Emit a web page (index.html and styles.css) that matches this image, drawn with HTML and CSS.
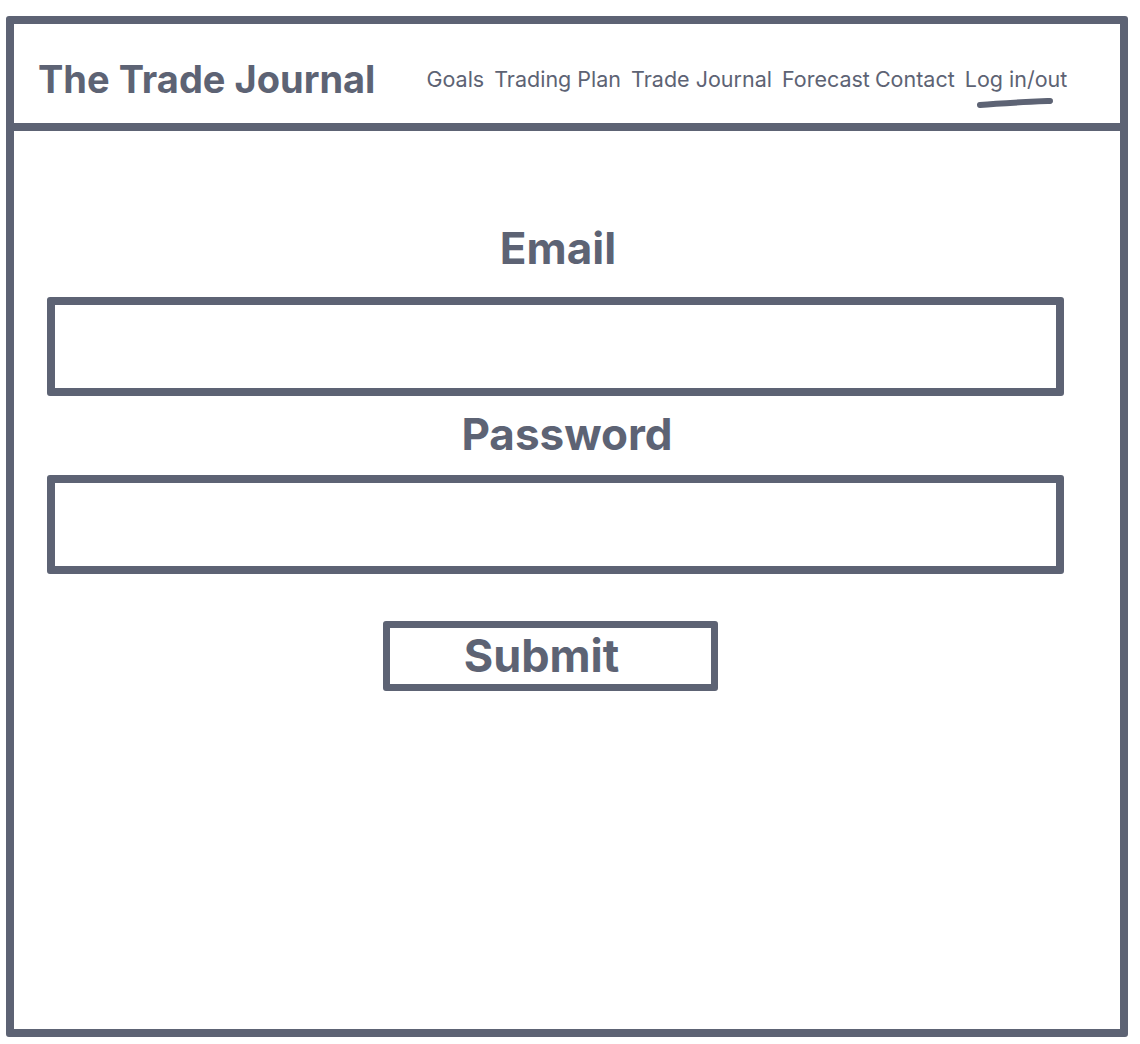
FILE: index.html
```html
<!DOCTYPE html>
<html lang="en">
<head>
<meta charset="utf-8">
<title>The Trade Journal</title>
<link rel="stylesheet" href="styles.css">
</head>
<body>
<div class="frame">
  <header class="header">
    <div class="brand">The Trade Journal</div>
    <nav class="nav">
      <a class="nav-item">Goals</a>
      <a class="nav-item">Trading Plan</a>
      <a class="nav-item">Trade Journal</a>
      <a class="nav-item">Forecast</a>
      <a class="nav-item nav-tight">Contact</a>
      <a class="nav-item nav-active">Log in/out
        <svg class="underline" width="80" height="14" viewBox="0 0 80 14"><path d="M4 10 C 25 8, 50 7, 74 6" stroke="#5d6374" stroke-width="6" stroke-linecap="round" fill="none"/></svg>
      </a>
    </nav>
  </header>
  <main class="main">
    <div class="label label-email">Email</div>
    <div class="field field-email"></div>
    <div class="label label-password">Password</div>
    <div class="field field-password"></div>
    <div class="submit-row">
      <div class="submit">Submit</div>
    </div>
  </main>
</div>
</body>
</html>
```
FILE: styles.css
```css
* { box-sizing: border-box; }
body {
  margin: 0;
  background: #ffffff;
  font-family: Inter, "Noto Sans", sans-serif;
  color: #5d6374;
}
.frame {
  margin: 16px 0 0 6px;
  width: 1122px;
  height: 1021px;
  border: 8px solid #5d6374;
  border-radius: 3px;
}
.header {
  height: 107px;
  border-bottom: 8px solid #5d6374;
  display: flex;
  align-items: flex-start;
  padding: 36px 0 0 24px;
}
.brand {
  font-size: 38px;
  font-weight: 700;
  line-height: 38px;
  white-space: nowrap;
}
.nav {
  display: flex;
  margin-left: 51px;
  gap: 10px;
  padding-top: 8px;
}
.nav-item {
  font-size: 21.5px;
  line-height: 22px;
  white-space: nowrap;
  position: relative;
}
.nav-tight { margin-left: -5px; }
.underline {
  position: absolute;
  left: 11px;
  top: 27px;
}
.main {
  padding-top: 95px;
}
.label {
  font-size: 44px;
  font-weight: 700;
  line-height: 44px;
  text-align: center;
}
.label-email { padding-right: 18px; }
.label-password { margin-top: 16px; }
.field {
  margin-left: 33px;
  width: 1017px;
  height: 99px;
  border: 8px solid #5d6374;
  border-radius: 3px;
}
.field-email { margin-top: 27px; }
.field-password { margin-top: 19px; }
.submit-row {
  margin-top: 47px;
  padding-left: 369px;
}
.submit {
  width: 335px;
  height: 70px;
  border: 7px solid #5d6374;
  border-radius: 3px;
  font-size: 45px;
  font-weight: 700;
  line-height: 56px;
  text-align: center;
  padding-right: 18px;
}
```
